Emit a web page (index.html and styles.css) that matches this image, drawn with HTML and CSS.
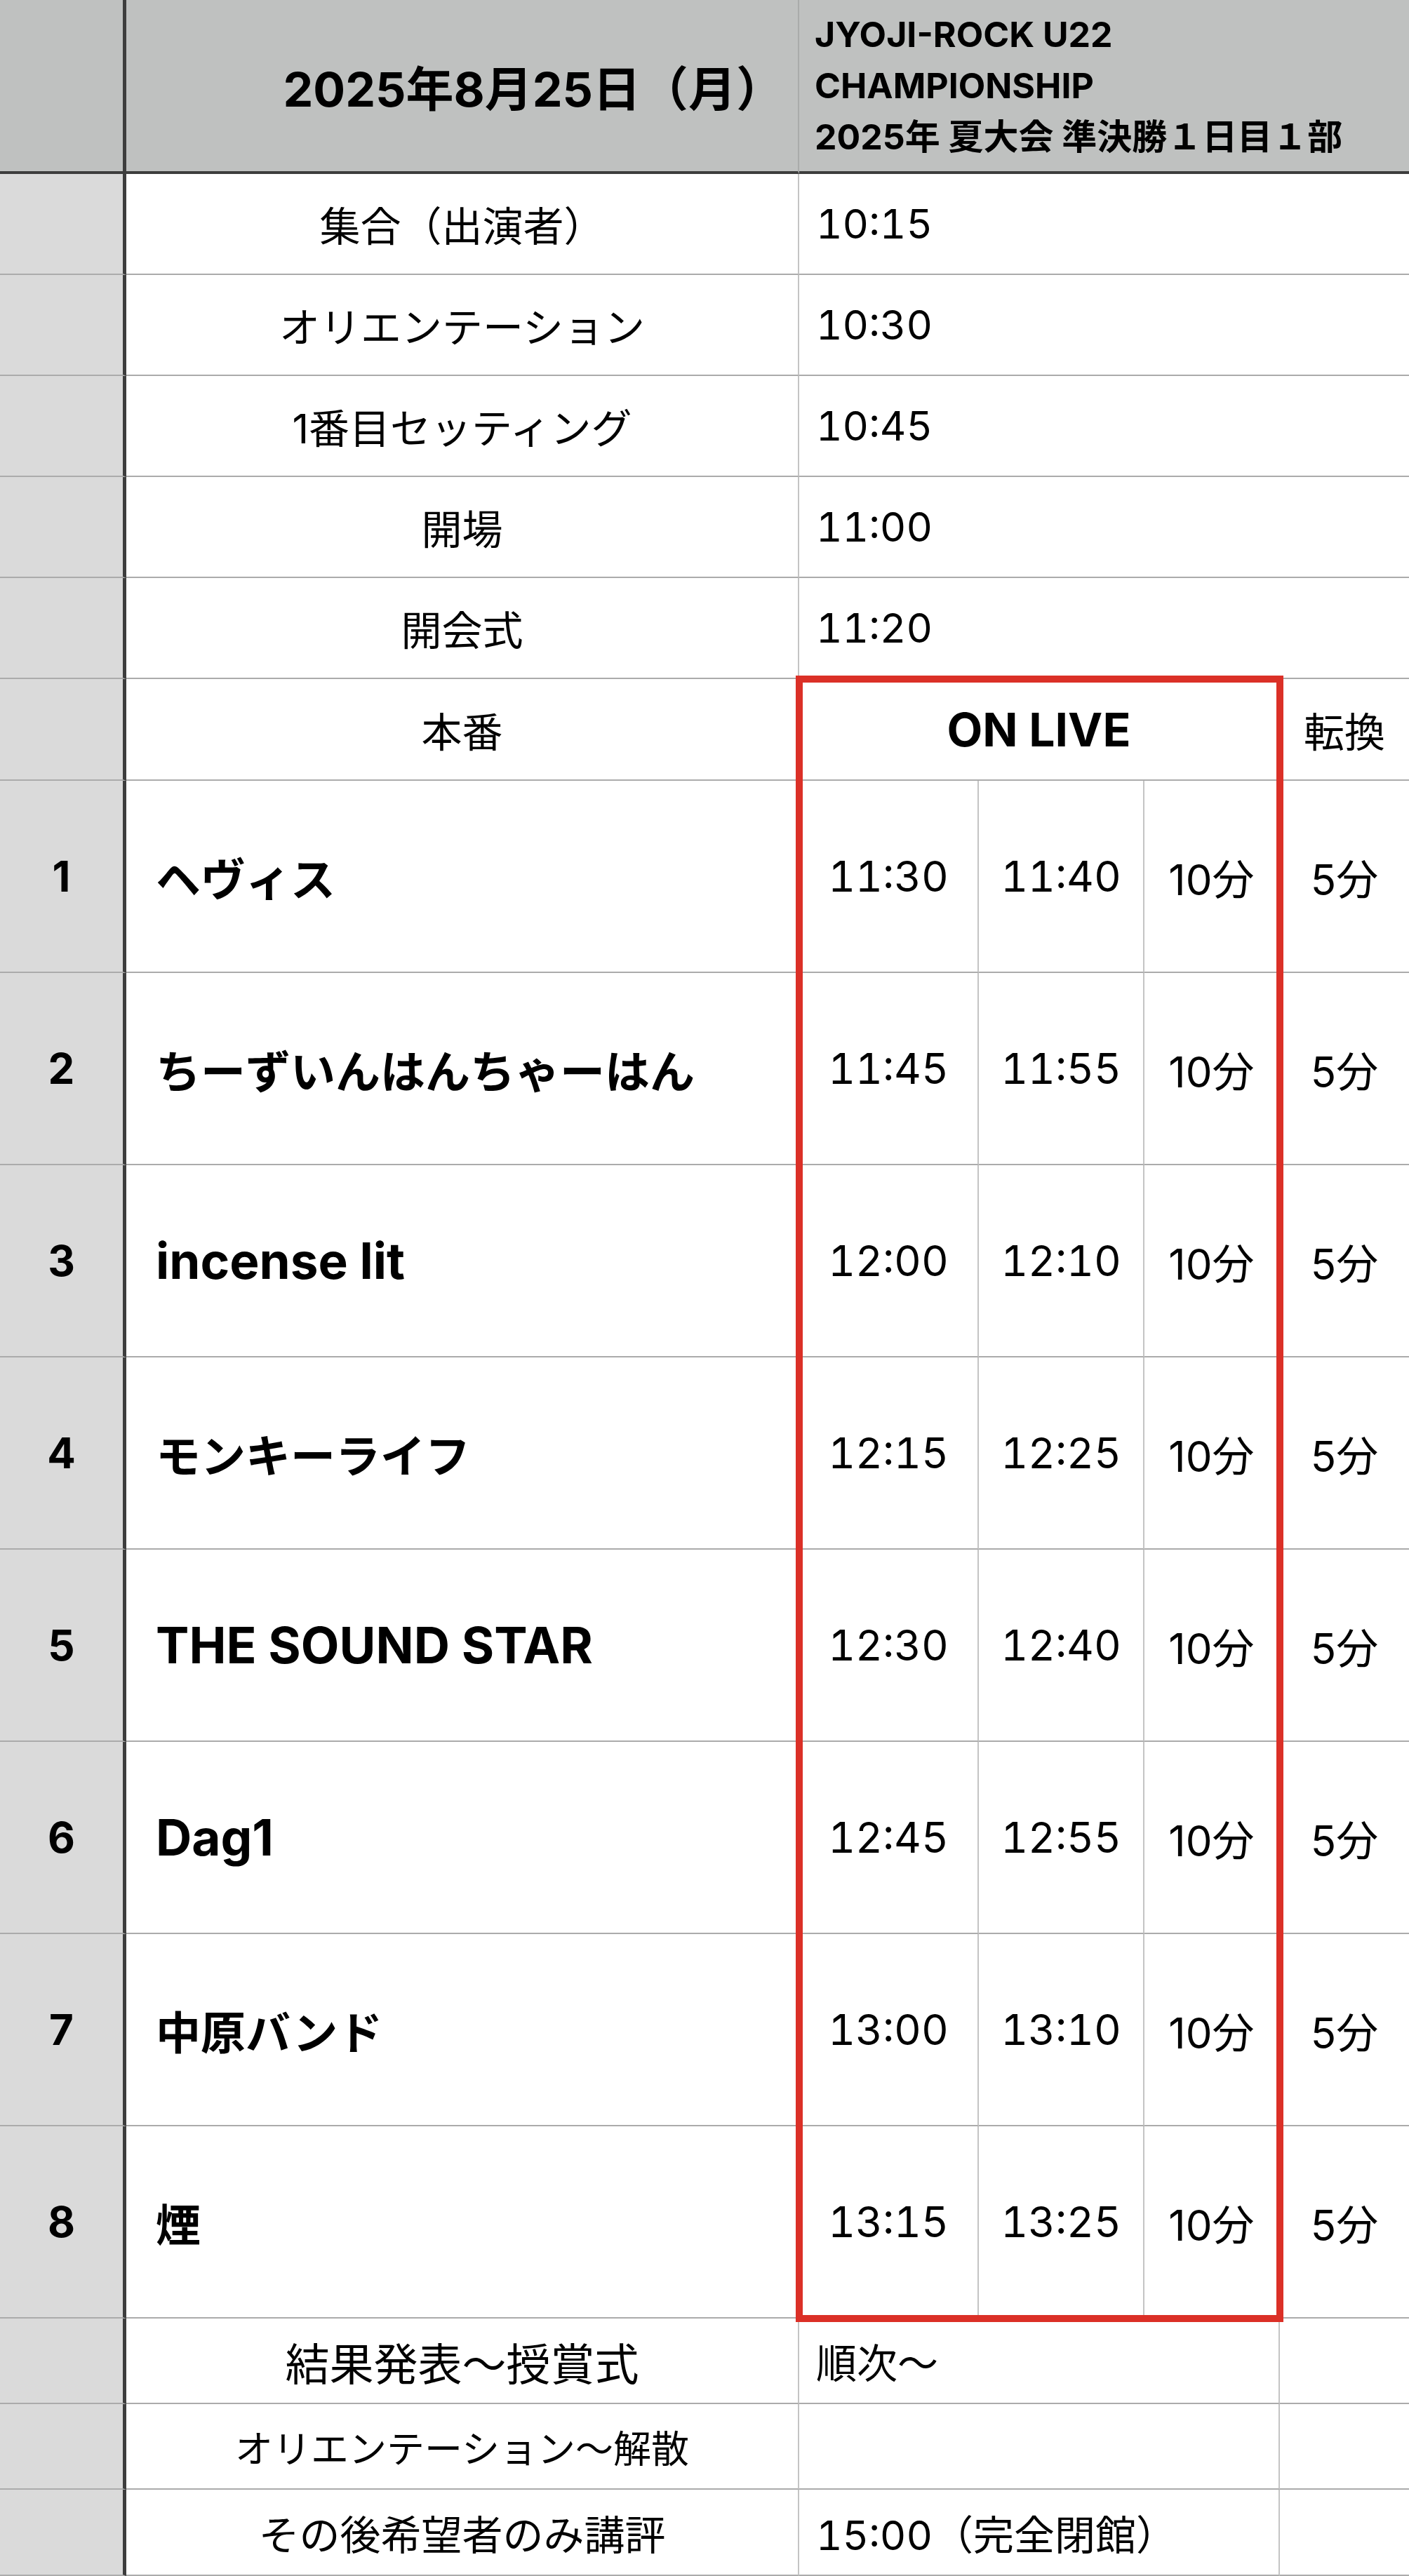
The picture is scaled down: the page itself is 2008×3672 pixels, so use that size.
FILE: index.html
```html
<!DOCTYPE html>
<html>

<head>
  <meta charset="utf-8">
  <title>タイムテーブル</title>
  <link rel="stylesheet" href="styles.css">
</head>

<body>
  <div class="sheet">
    <!-- header -->
    <div class="cell rowhead head"></div>
    <div class="cell head date">2025年8月25日（月）</div>
    <div class="cell head title wide4">JYOJI-ROCK U22<br>CHAMPIONSHIP<br>2025年 夏大会 準決勝１日目１部</div>

    <!-- before the show -->
    <div class="cell rowhead"></div>
    <div class="cell label">集合（出演者）</div>
    <div class="cell value wide4 last">10:15</div>

    <div class="cell rowhead"></div>
    <div class="cell label">オリエンテーション</div>
    <div class="cell value wide4 last">10:30</div>

    <div class="cell rowhead"></div>
    <div class="cell label">1番目セッティング</div>
    <div class="cell value wide4 last">10:45</div>

    <div class="cell rowhead"></div>
    <div class="cell label">開場</div>
    <div class="cell value wide4 last">11:00</div>

    <div class="cell rowhead"></div>
    <div class="cell label">開会式</div>
    <div class="cell value wide4 last">11:20</div>

    <div class="cell rowhead"></div>
    <div class="cell label">本番</div>
    <div class="cell onlive wide3">ON LIVE</div>
    <div class="cell center last">転換</div>

    <!-- bands -->
    <div class="cell rowhead num">1</div>
    <div class="cell band">ヘヴィス</div>
    <div class="cell time">11:30</div>
    <div class="cell time">11:40</div>
    <div class="cell dur">10分</div>
    <div class="cell dur last">5分</div>

    <div class="cell rowhead num">2</div>
    <div class="cell band">ちーずいんはんちゃーはん</div>
    <div class="cell time">11:45</div>
    <div class="cell time">11:55</div>
    <div class="cell dur">10分</div>
    <div class="cell dur last">5分</div>

    <div class="cell rowhead num">3</div>
    <div class="cell band latin">incense lit</div>
    <div class="cell time">12:00</div>
    <div class="cell time">12:10</div>
    <div class="cell dur">10分</div>
    <div class="cell dur last">5分</div>

    <div class="cell rowhead num">4</div>
    <div class="cell band">モンキーライフ</div>
    <div class="cell time">12:15</div>
    <div class="cell time">12:25</div>
    <div class="cell dur">10分</div>
    <div class="cell dur last">5分</div>

    <div class="cell rowhead num">5</div>
    <div class="cell band latin">THE SOUND STAR</div>
    <div class="cell time">12:30</div>
    <div class="cell time">12:40</div>
    <div class="cell dur">10分</div>
    <div class="cell dur last">5分</div>

    <div class="cell rowhead num">6</div>
    <div class="cell band latin">Dag1</div>
    <div class="cell time">12:45</div>
    <div class="cell time">12:55</div>
    <div class="cell dur">10分</div>
    <div class="cell dur last">5分</div>

    <div class="cell rowhead num">7</div>
    <div class="cell band">中原バンド</div>
    <div class="cell time">13:00</div>
    <div class="cell time">13:10</div>
    <div class="cell dur">10分</div>
    <div class="cell dur last">5分</div>

    <div class="cell rowhead num">8</div>
    <div class="cell band">煙</div>
    <div class="cell time">13:15</div>
    <div class="cell time">13:25</div>
    <div class="cell dur">10分</div>
    <div class="cell dur last">5分</div>

    <!-- after -->
    <div class="cell rowhead"></div>
    <div class="cell label big">結果発表〜授賞式</div>
    <div class="cell value wide3">順次〜</div>
    <div class="cell last"></div>

    <div class="cell rowhead"></div>
    <div class="cell label small">オリエンテーション〜解散</div>
    <div class="cell value wide3"></div>
    <div class="cell last"></div>

    <div class="cell rowhead"></div>
    <div class="cell label">その後希望者のみ講評</div>
    <div class="cell value wide3">15:00（完全閉館）</div>
    <div class="cell last"></div>

    <!-- red frame round the live block -->
    <div class="live-frame"></div>
  </div>
</body>

</html>
```

FILE: styles.css
```css
body {
  margin: 0;
  background-color: white;
  color: #000;
  font-family: "Inter", "Noto Sans CJK JP", sans-serif;
}

.sheet {
  position: relative;
  display: grid;
  width: 2008px;
  grid-template-columns: 180px 959px 256px 236px 193px 184px;
  grid-template-rows: 248px repeat(5, 144px) 145px repeat(8, 274px) 122px 122px 123px;
}

.cell {
  display: flex;
  align-items: center;
  box-sizing: border-box;
  min-width: 0;
  white-space: nowrap;
  border-bottom: 2px solid #ababab;
  border-right: 2px solid #c4c4c4;
  font-size: 58px;
}

.last {
  border-right: none;
}

.wide4 {
  grid-column: span 4;
  border-right: none;
}

.wide3 {
  grid-column: span 3;
}

.rowhead {
  justify-content: center;
  background-color: #dadada;
  border-right: 5px solid #3d3d3d;
}

.head {
  background-color: #bfc1c0;
  border-bottom: 4px solid #3d3d3d;
}

.date {
  justify-content: flex-end;
  padding-right: 20px;
  font-size: 68px;
  font-weight: bold;
  border-right-color: #a9abaa;
}

.title {
  padding-left: 22px;
  font-size: 50px;
  font-weight: bold;
  line-height: 73px;
}

.label {
  justify-content: center;
}

.label.big {
  font-size: 63px;
}

.label.small {
  font-size: 54px;
}

.value {
  padding-left: 24px;
  font-variant-numeric: tabular-nums;
}

.center {
  justify-content: center;
}

.onlive {
  justify-content: center;
  font-size: 66px;
  font-weight: bold;
}

.num {
  font-size: 60px;
  font-weight: bold;
}

.band {
  padding-left: 42px;
  font-size: 64px;
  font-weight: bold;
}

.band.latin {
  font-size: 71px;
}

.time {
  justify-content: center;
  font-size: 60px;
  font-variant-numeric: tabular-nums;
}

.dur {
  justify-content: center;
  font-size: 60px;
}

.live-frame {
  position: absolute;
  grid-row: 7 / 16;
  grid-column: 3 / 6;
  inset: -5px;
  border: 10px solid #db3027;
  pointer-events: none;
}
```
